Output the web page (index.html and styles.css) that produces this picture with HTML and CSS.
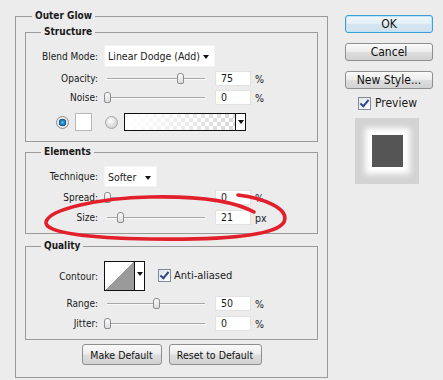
FILE: index.html
```html
<!DOCTYPE html>
<html lang="en">
<head>
    <meta charset="UTF-8">
    <meta name="viewport" content="width=device-width, initial-scale=1.0">
    <title>Layer Style - Outer Glow</title>
    <link rel="stylesheet" href="styles.css">
</head>
<body>

    <div class="dialog">
        <div class="main">
            <fieldset class="group outer">
                <legend>Outer Glow</legend>

                <fieldset class="group structure">
                    <legend>Structure</legend>
                    <div class="row row-select">
                        <label class="lbl">Blend Mode:</label>
                        <div class="select select-blend"><span>Linear Dodge (Add)</span><i class="caret"></i></div>
                    </div>
                    <div class="row row-slider">
                        <label class="lbl">Opacity:</label>
                        <div class="slider"><span class="thumb" style="left: 75%"></span></div>
                        <div class="num">75</div><span class="unit">%</span>
                    </div>
                    <div class="row row-slider">
                        <label class="lbl">Noise:</label>
                        <div class="slider"><span class="thumb" style="left: 0%"></span></div>
                        <div class="num">0</div><span class="unit">%</span>
                    </div>
                    <div class="row row-color">
                        <span class="radio on"></span>
                        <span class="swatch"></span>
                        <span class="radio"></span>
                        <div class="gradient">
                            <span class="grad-fill"></span>
                            <span class="grad-drop"><i class="caret"></i></span>
                        </div>
                    </div>
                </fieldset>

                <fieldset class="group elements">
                    <legend>Elements</legend>
                    <div class="row row-tech">
                        <label class="lbl">Technique:</label>
                        <div class="select select-tech"><span>Softer</span><i class="caret"></i></div>
                    </div>
                    <div class="row row-slider row-spread">
                        <label class="lbl">Spread:</label>
                        <div class="slider"><span class="thumb" style="left: 0%"></span></div>
                        <div class="num">0</div><span class="unit">%</span>
                    </div>
                    <div class="row row-slider">
                        <label class="lbl">Size:</label>
                        <div class="slider"><span class="thumb" style="left: 14%"></span></div>
                        <div class="num">21</div><span class="unit">px</span>
                    </div>
                </fieldset>

                <fieldset class="group quality">
                    <legend>Quality</legend>
                    <div class="row row-contour">
                        <label class="lbl">Contour:</label>
                        <div class="contour">
                            <span class="curve"></span>
                            <span class="contour-drop"><i class="caret"></i></span>
                        </div>
                        <span class="check"></span>
                        <span class="check-text">Anti-aliased</span>
                    </div>
                    <div class="row row-slider">
                        <label class="lbl">Range:</label>
                        <div class="slider"><span class="thumb" style="left: 50%"></span></div>
                        <div class="num">50</div><span class="unit">%</span>
                    </div>
                    <div class="row row-slider">
                        <label class="lbl">Jitter:</label>
                        <div class="slider"><span class="thumb" style="left: 0%"></span></div>
                        <div class="num">0</div><span class="unit">%</span>
                    </div>
                </fieldset>

                <div class="actions">
                    <button class="btn btn-make">Make Default</button>
                    <button class="btn btn-reset">Reset to Default</button>
                </div>
            </fieldset>
        </div>

        <div class="side">
            <button class="btn side-btn default">OK</button>
            <button class="btn side-btn">Cancel</button>
            <button class="btn side-btn">New Style...</button>
            <div class="preview-row">
                <span class="check"></span>
                <span class="preview-text">Preview</span>
            </div>
            <div class="preview">
                <span class="preview-square"></span>
            </div>
        </div>
    </div>

    <!-- red marker drawn over the Size row -->
    <svg class="annot" width="443" height="380" viewBox="0 0 443 380">
        <path d="M238,195 C262,198 290,208 284,222 C276,236 220,240 150,239 C90,238 44,233 46,222 C49,209 100,198 150,197 C195,196 232,200 254,212"
              fill="none" stroke="#e2202b" stroke-width="3.6" stroke-linecap="round"/>
    </svg>

</body>
</html>
```

FILE: styles.css
```css
html, body {
    margin: 0;
    padding: 0;
}
body {
    background-color: #ececec;
    color: #1a1a1a;
    font-family: 'DejaVu Sans Condensed', 'DejaVu Sans', 'Liberation Sans', sans-serif;
    font-size: 10px;
    width: 443px;
    height: 380px;
    overflow: hidden;
    position: relative;
}
.dialog {
    display: flex;
    align-items: flex-start;
    padding: 10px 0 0 15px;
}
.main {
    width: 313px;
}

/* group boxes */
.group {
    margin: 0;
    border: 1px solid #9a9a9a;
    padding: 0;
    min-width: 0;
}
.group legend {
    font-weight: bold;
    line-height: 12px;
    padding: 0 3px;
    margin-left: 15px;
}
.outer {
    padding: 4px 9px 12px 9px;
}
.outer > legend {
    margin-left: 7px;
}
.structure {
    padding-top: 7px;
    padding-bottom: 10px;
}
.elements {
    margin-top: 4px;
    padding-top: 8px;
    padding-bottom: 8px;
}
.quality {
    margin-top: 6px;
    padding-top: 9px;
    padding-bottom: 8px;
}

/* rows */
.row {
    display: flex;
    align-items: center;
}
.lbl {
    width: 72px;
    text-align: right;
    flex: none;
}
.row-select {
    height: 22px;
}
.row-slider {
    height: 15px;
    margin-top: 4px;
}
.row-spread {
    margin-top: 3px;
}
.quality .row-slider {
    margin-top: 5px;
}
.elements .row-slider + .row-slider {
    margin-top: 5px;
}
.row-color {
    height: 18px;
    margin-top: 8px;
}
.row-tech {
    height: 21px;
}
.row-contour {
    height: 30px;
}

/* dropdowns */
.select {
    position: relative;
    height: 100%;
    margin-left: 6px;
    background-color: #fff;
    border: 1px solid #f4f4f4;
    box-sizing: border-box;
    display: flex;
    align-items: center;
    padding-left: 3px;
}
.select-blend {
    width: 111px;
    font-size: 10.5px;
}
.select-tech {
    width: 53px;
    font-size: 10.5px;
}
.caret {
    display: block;
    width: 0;
    height: 0;
    border-left: 3.5px solid transparent;
    border-right: 3.5px solid transparent;
    border-top: 4px solid #111;
}
.select .caret {
    position: absolute;
    right: 5px;
    top: 9px;
}

/* sliders */
.slider {
    position: relative;
    width: 98px;
    height: 15px;
    margin-left: 9px;
}
.slider::before {
    content: "";
    position: absolute;
    left: 0;
    right: 0;
    top: 7px;
    height: 1px;
    background-color: #a9a9a9;
    border-bottom: 1px solid #fafafa;
}
.thumb {
    position: absolute;
    top: 2px;
    width: 5px;
    height: 9px;
    margin-left: -3.5px;
    border: 1px solid #8c8c8c;
    border-radius: 3px 3px 2px 2px;
    background: linear-gradient(#fbfbfb, #dcdcdc);
}
.num {
    width: 36px;
    height: 15px;
    margin-left: 10px;
    box-sizing: border-box;
    background-color: #fff;
    border: 1px solid #e2e2e2;
    padding-left: 5px;
    line-height: 13px;
    font-size: 10.5px;
}
.unit {
    margin-left: 4px;
    font-size: 10.5px;
}

/* colour row */
.radio {
    width: 11px;
    height: 11px;
    border-radius: 50%;
    border: 1px solid #a5a5a5;
    background: radial-gradient(circle at 40% 35%, #ffffff, #d4d4d4 70%);
    flex: none;
}
.radio.on {
    margin-left: 30px;
    border-color: #8a8a8a;
    background: radial-gradient(circle at 50% 50%, #5cc0f0 0, #1a78b8 2.5px, #0b4f80 3.5px, #e2e2e2 4px, #f4f4f4 6px);
}
.swatch {
    width: 15px;
    height: 16px;
    margin-left: 6px;
    margin-right: 13px;
    background-color: #fff;
    border: 1px solid #b8b8b8;
    flex: none;
}
.gradient {
    width: 122px;
    height: 18px;
    margin-left: 6px;
    box-sizing: border-box;
    border: 1px solid #111;
    display: flex;
}
.grad-fill {
    flex: 1;
    background:
        linear-gradient(to right, #fff 0%, rgba(255, 255, 255, 0.6) 45%, rgba(255, 255, 255, 0) 100%),
        repeating-conic-gradient(#d8d8d8 0 25%, #ffffff 0 50%) 0 0 / 8px 8px;
}
.grad-drop {
    width: 10px;
    border-left: 1px solid #111;
    background-color: #fff;
    display: flex;
    justify-content: center;
    padding-top: 6px;
    box-sizing: border-box;
}
.grad-drop .caret {
    border-left-width: 3px;
    border-right-width: 3px;
    border-top-width: 4px;
}

/* contour */
.contour {
    width: 41px;
    height: 30px;
    margin-left: 6px;
    box-sizing: border-box;
    border: 1px solid #111;
    display: flex;
    background-color: #fff;
}
.curve {
    flex: 1;
    background: linear-gradient(to bottom right, #fff 50%, #9a9a9a 50%);
}
.contour-drop {
    width: 10px;
    border-left: 1px solid #111;
    display: flex;
    justify-content: center;
    padding-top: 10px;
    box-sizing: border-box;
}
.contour-drop .caret {
    border-left-width: 3px;
    border-right-width: 3px;
}

/* checkbox */
.check {
    position: relative;
    width: 11px;
    height: 11px;
    border: 1px solid #7f8a9a;
    background: linear-gradient(135deg, #dfe3ea, #ffffff);
    flex: none;
}
.check::after {
    content: "";
    position: absolute;
    left: 3px;
    top: 0px;
    width: 3px;
    height: 7px;
    border-right: 2px solid #2f4a86;
    border-bottom: 2px solid #2f4a86;
    transform: rotate(40deg);
}
.row-contour .check {
    margin-left: 13px;
    margin-top: -2px;
}
.check-text {
    margin-left: 3px;
    margin-top: -2px;
    font-size: 11px;
}

/* buttons */
.btn {
    font-family: inherit;
    color: #111;
    border: 1px solid #8e8e8e;
    border-radius: 3px;
    background: linear-gradient(#fafafa, #ececec 48%, #dedede 52%, #d2d2d2);
    padding: 0;
    cursor: pointer;
}
.actions {
    display: flex;
    justify-content: center;
    gap: 7px;
    margin-top: 4px;
}
.actions .btn {
    height: 21px;
    font-size: 10.5px;
}
.btn-make {
    width: 80px;
}
.btn-reset {
    width: 93px;
}

/* right column */
.side {
    width: 88px;
    margin-left: 17px;
    padding-top: 5px;
    display: flex;
    flex-direction: column;
}
.side-btn {
    height: 18px;
    font-size: 12px;
    line-height: 14px;
}
.side-btn + .side-btn {
    margin-top: 10px;
}
.side-btn.default {
    border-color: #3b9fd6;
    background: linear-gradient(#f2f8fc, #e3eef6 48%, #d6e6f1 52%, #cfe1ee);
    box-shadow: inset 0 0 0 1px #bfe3f7;
}
.preview-row {
    display: flex;
    align-items: center;
    margin-top: 8px;
    margin-left: 13px;
    height: 12px;
}
.preview-text {
    margin-left: 4px;
    font-size: 12px;
}
.preview {
    width: 64px;
    height: 66px;
    margin-top: 9px;
    margin-left: 10px;
    background-color: #d3d3d3;
    display: flex;
    align-items: center;
    justify-content: center;
}
.preview-square {
    width: 31px;
    height: 32px;
    background-color: #555555;
    box-shadow: 0 0 6px 7px #ffffff;
}

/* annotation */
.annot {
    position: absolute;
    left: 0;
    top: 0;
    pointer-events: none;
}
```
